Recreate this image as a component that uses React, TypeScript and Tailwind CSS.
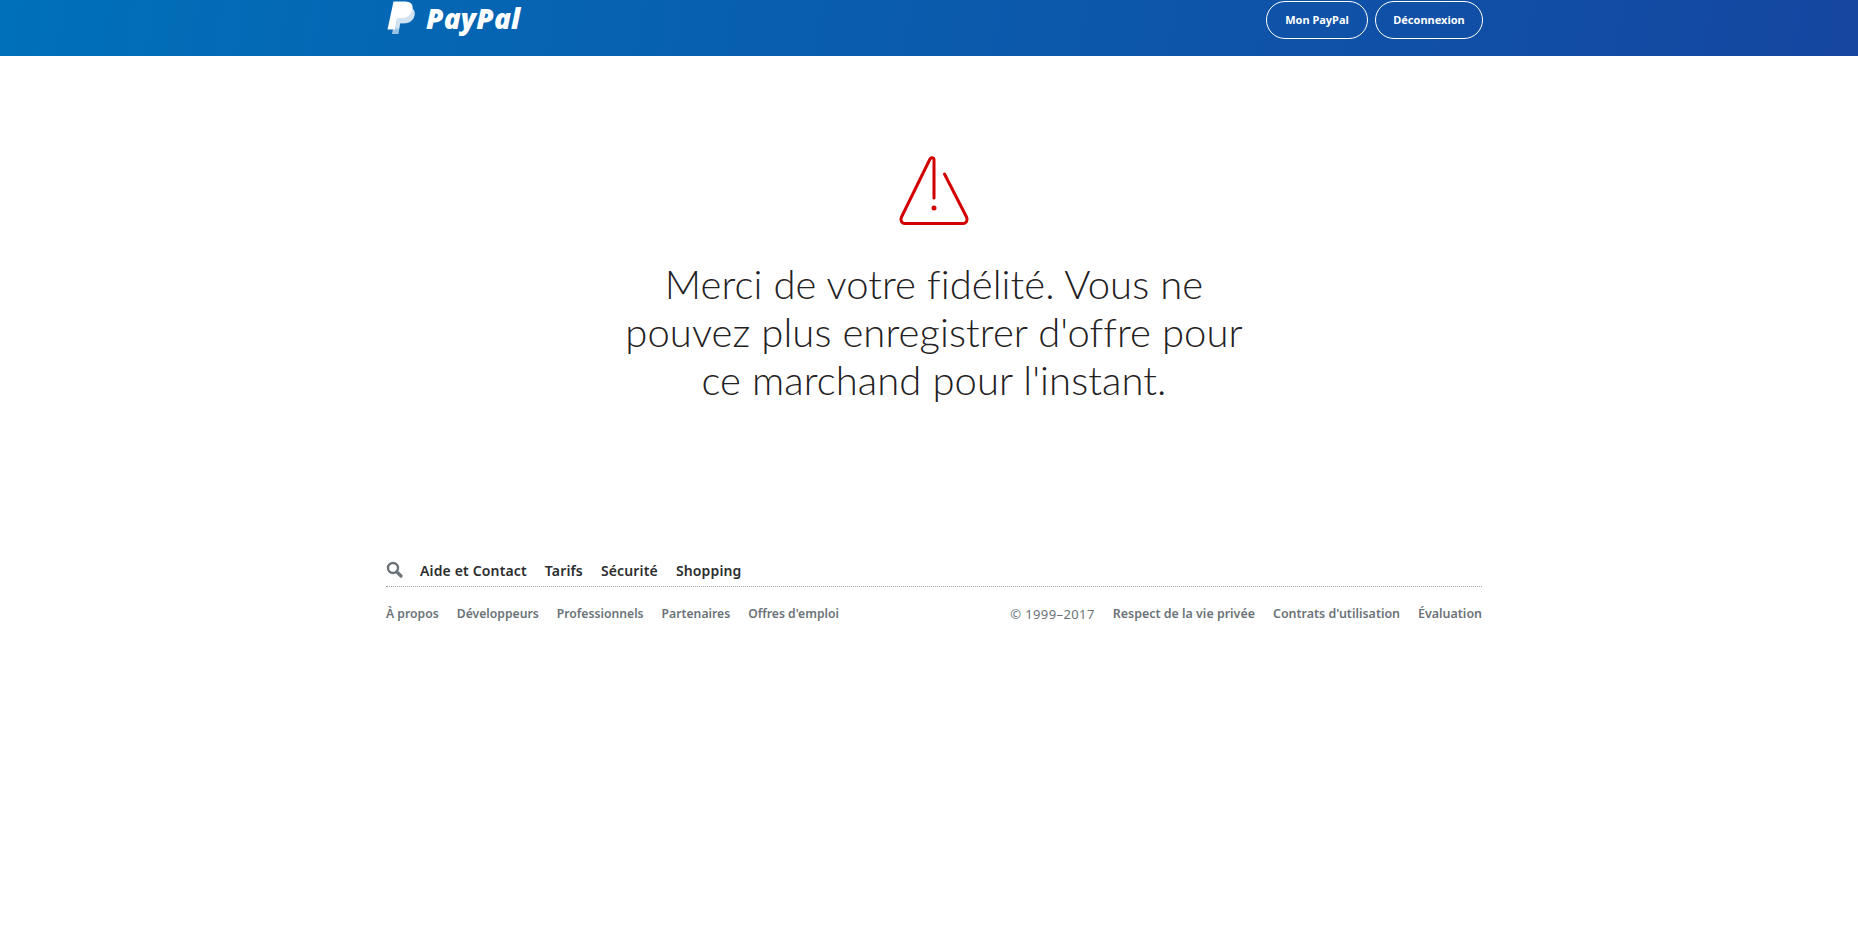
import React from "react";

function Mark() {
  return (
    <svg width="29" height="33" viewBox="0 0 29 33" className="block">
      <path d="M10 6h10c5 0 8.500 3 7.600 8-1 5.500-5 8.500-10.500 8.500h-4L11.500 33H5z" fill="#ffffff" fillOpacity="0.6" />
      <path d="M6.500 0.500h11.500c5.500 0 8.500 3 7.500 7.800-1.100 5.700-5.300 9-11 9H10l-1.900 11.200H0.500z" fill="#ffffff" />
      <path d="M10 17.300h4.500c5.700 0 9.900-3.300 11-9 .1-.3.100-.6.100-.9 1.500 1.300 2.300 3.400 2 6.100-.9 5.500-5 8.500-10.500 8.500h-4l-.9 5.500H8.800z" fill="#ffffff" fillOpacity="0.55" />
    </svg>
  );
}

const top = ["Aide et Contact", "Tarifs", "Sécurité", "Shopping"];
const left = ["À propos", "Développeurs", "Professionnels", "Partenaires", "Offres d'emploi"];
const right = ["Respect de la vie privée", "Contrats d'utilisation", "Évaluation"];

export default function App() {
  return (
    <div className="min-h-[933px] bg-white font-['Noto_Sans',sans-serif]">
      <header className="h-[56px] bg-[linear-gradient(100deg,#0070ba,#1546a0)]">
        <div className="ml-[386px] w-[1097px] flex justify-between items-start">
          <div className="flex items-start gap-[10px] pt-[1px] ml-[1px]">
            <Mark />
            <span className="font-['Open_Sans',sans-serif] font-extrabold italic text-[28px] leading-[35px] text-white tracking-[0.2px]">PayPal</span>
          </div>
          <div className="flex gap-[7px] pt-[1px]">
            <a className="flex items-center justify-center w-[102px] h-[38px] rounded-full border border-white text-white text-[11px] font-bold">Mon PayPal</a>
            <a className="flex items-center justify-center w-[108px] h-[38px] rounded-full border border-white text-white text-[11px] font-bold">Déconnexion</a>
          </div>
        </div>
      </header>

      <main className="ml-[386px] w-[1096px] flex flex-col items-center pt-[99px]">
        <svg width="72" height="72" viewBox="0 0 72 72" className="block">
          <path d="M36 43V5c0-2.500-2.800-3-4-1L3.500 62c-1.500 3 0 6.500 3.500 6.500h58c3.500 0 5-3.500 3.500-6.500L46.500 19" fill="none" stroke="#d20000" strokeWidth="3" strokeLinecap="round" strokeLinejoin="round" />
          <circle cx="36" cy="53" r="2.500" fill="#d20000" />
        </svg>
        <h1 className="mt-[33px] w-[640px] text-center font-['Lato',sans-serif] font-light text-[40px] leading-[48px] tracking-[0.08px] text-[#1f2122]">
          Merci de votre fidélité. Vous ne pouvez plus enregistrer d'offre pour ce marchand pour l'instant.
        </h1>
      </main>

      <footer className="ml-[386px] w-[1096px] mt-[151px]">
        <div className="flex items-center h-[32px] border-b border-dotted border-[#9da3a6]">
          <svg width="17" height="17" viewBox="0 0 17 17" className="block mr-[17px] mb-[3px]">
            <circle cx="7" cy="7" r="5" fill="none" stroke="#6c7378" strokeWidth="2.400" />
            <path d="M10.800 10.800L15 15" stroke="#6c7378" strokeWidth="3.200" strokeLinecap="round" />
          </svg>
          <nav className="flex gap-[18px] text-[14px] font-semibold tracking-[0.15px] text-[#2c2e2f]">
            {top.map((t) => <a key={t}>{t}</a>)}
          </nav>
        </div>
        <div className="flex justify-between pt-[18px] leading-[18px] font-semibold text-[#6c7378]">
          <nav className="flex gap-[18px] text-[12.200px]">
            {left.map((t) => <a key={t}>{t}</a>)}
          </nav>
          <nav className="flex gap-[18px] text-[12.450px]">
            <span className="font-normal text-[13px] tracking-[0.4px]">© 1999–2017</span>
            {right.map((t) => <a key={t}>{t}</a>)}
          </nav>
        </div>
      </footer>
    </div>
  );
}
